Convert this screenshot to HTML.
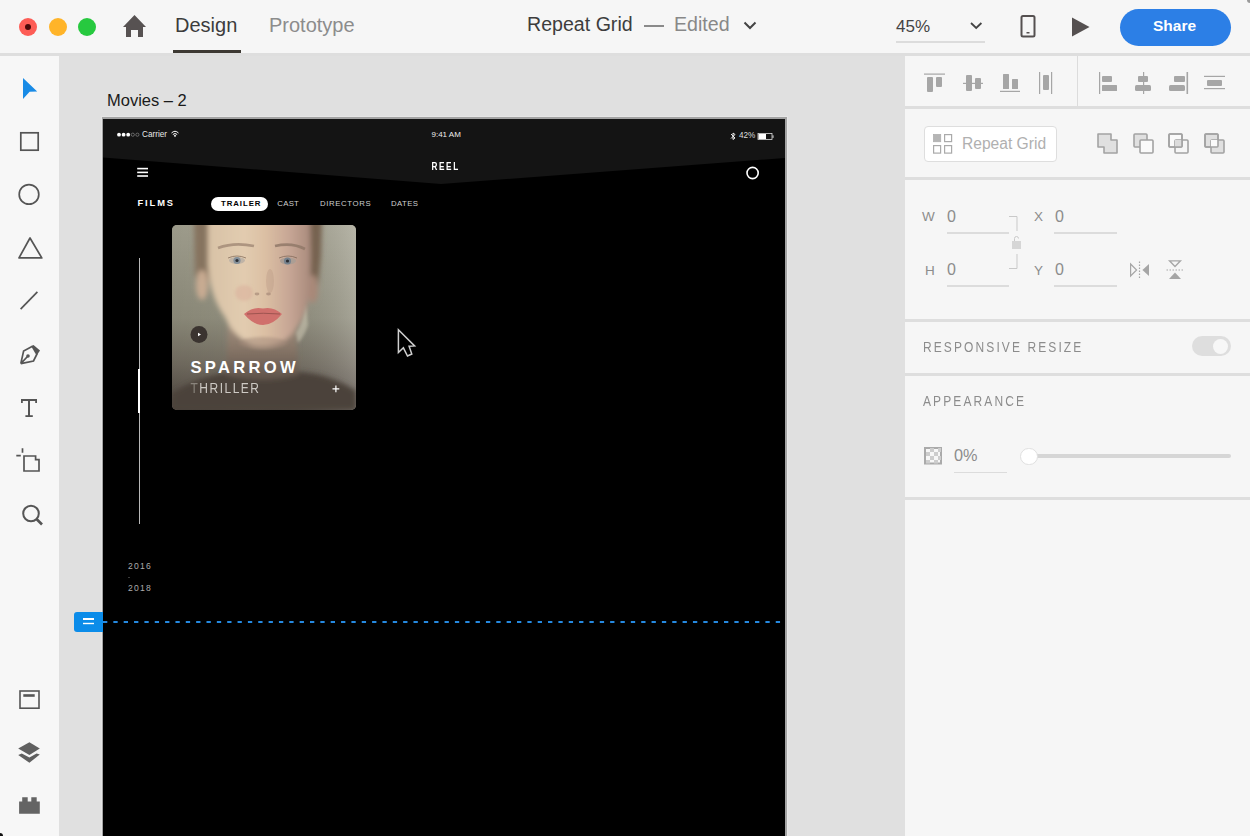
<!DOCTYPE html>
<html><head><meta charset="utf-8">
<style>
*{margin:0;padding:0;box-sizing:border-box}
html,body{width:1250px;height:836px;overflow:hidden;background:#e0e0e0;font-family:"Liberation Sans",sans-serif}
.a{position:absolute}
.t{position:absolute;white-space:nowrap;line-height:1}
svg{position:absolute;overflow:visible}
</style></head><body>
<!-- top bar -->
<div class="a" style="left:0;top:0;width:1250px;height:53px;background:#f6f6f6"></div>
<div class="a" style="left:0;top:53px;width:1250px;height:3px;background:#dedede"></div>
<!-- traffic lights -->
<div class="a" style="left:19px;top:17.5px;width:18px;height:18px;border-radius:50%;background:#fd5d56"></div>
<div class="a" style="left:25px;top:23.5px;width:6px;height:6px;border-radius:50%;background:#4a0a0a"></div>
<div class="a" style="left:49px;top:17.5px;width:18px;height:18px;border-radius:50%;background:#ffb429"></div>
<div class="a" style="left:78px;top:17.5px;width:18px;height:18px;border-radius:50%;background:#27c93f"></div>
<!-- home -->
<svg style="left:0;top:0" width="1" height="1"><path d="M134.5 15 L146 27 L143 27 L143 37 L138 37 L138 30 L131 30 L131 37 L126 37 L126 27 L123 27 Z" fill="#575252"/></svg>
<div class="t" id="design" style="left:175px;top:15px;font-size:20px;color:#3c3c3c">Design</div>
<div class="a" style="left:173px;top:50px;width:68px;height:3px;background:#3d3933"></div>
<div class="t" id="proto" style="left:269px;top:15px;font-size:20px;color:#8c8c8c">Prototype</div>
<div class="t" id="title" style="left:527px;top:15.3px;font-size:19.6px;color:#3d3d3d">Repeat Grid</div>
<div class="a" style="left:644px;top:25px;width:20px;height:1.5px;background:#8a8a8a"></div>
<div class="t" id="edited" style="left:674px;top:15.3px;font-size:19.6px;color:#888">Edited</div>
<svg style="left:0;top:0" width="1" height="1"><path d="M744.5 22.5 L750 28 L755.5 22.5" fill="none" stroke="#444" stroke-width="2"/></svg>
<div class="t" id="zoom" style="left:896px;top:18px;font-size:17px;color:#444">45%</div>
<svg style="left:0;top:0" width="1" height="1"><path d="M971 23 L976.2 28 L981.4 23" fill="none" stroke="#444" stroke-width="1.8"/></svg>
<div class="a" style="left:896px;top:41px;width:89px;height:2px;background:#dcdcdc"></div>
<!-- phone -->
<svg style="left:0;top:0" width="1" height="1"><rect x="1021.5" y="16" width="13" height="20.5" rx="1.5" fill="none" stroke="#555050" stroke-width="2"/><rect x="1026.5" y="32" width="3" height="1.5" fill="#555050"/></svg>
<!-- play -->
<svg style="left:0;top:0" width="1" height="1"><path d="M1072 17.5 L1089.5 27 L1072 36.5 Z" fill="#555050"/></svg>
<!-- share -->
<div class="a" style="left:1120px;top:9px;width:111px;height:37px;border-radius:18.5px;background:#2c7fe6"></div>
<div class="t" id="share" style="left:1153px;top:18px;font-size:15.5px;font-weight:bold;color:#fff">Share</div>

<!-- left toolbar -->
<div class="a" style="left:0;top:56px;width:59px;height:780px;background:#f7f7f7"></div>
<svg style="left:0;top:0" width="60" height="836">
<path d="M23 78 L37.2 91.4 L29.6 91.8 L23 99 Z" fill="#198be6"/>
<g fill="none" stroke="#555" stroke-width="1.7">
<rect x="20.8" y="132.8" width="17.4" height="17.4"/>
<circle cx="29" cy="194.4" r="9.8"/>
<path d="M30 238 L19 257.9 L41.8 257.9 Z" stroke-linejoin="round"/>
<path d="M20.6 309.2 L37.4 291.8"/>
<path d="M20.8 363.6 L23.6 351 L32 346.5 M37.5 353 L33.5 361 L20.8 363.6 M20.8 363.6 L27.5 356.5"/>
</g>
<path d="M31 346 L33.5 345 L40 350.5 L38.5 352.8 L36 354.5 Z" fill="#555"/>
<circle cx="28" cy="356" r="1.8" fill="#555"/>
<g fill="#555">
<rect x="21" y="399" width="16" height="2"/>
<rect x="21" y="399" width="1.8" height="4"/>
<rect x="35.2" y="399" width="1.8" height="4"/>
<rect x="28" y="399" width="2" height="17.8"/>
<rect x="25.4" y="415.2" width="7.4" height="1.8"/>
</g>
<g fill="none" stroke="#555" stroke-width="1.7">
<path d="M22.5 448.2 V452.8 M16.3 455.6 H20.8"/>
<path d="M24 456 H35.6 V459.6 H39 V471 H24 Z"/>
<circle cx="31" cy="513.5" r="7.8" stroke-width="2"/>
<path d="M36.5 519 L42 524.5" stroke-width="2.6"/>
<rect x="20" y="691" width="19" height="17.2" stroke-width="1.6"/>
</g>
<rect x="23.3" y="694.2" width="11.4" height="2.6" fill="#555"/>
<path d="M18.2 748.4 L29.4 742.2 L39.8 748.6 L29.4 755 Z" fill="#606060"/>
<path d="M18.2 754.9 L21.8 753.6 L29.4 757.6 L36.6 753.6 L39.8 754.6 L29.4 762.8 Z" fill="#606060"/>
<path d="M19.1 801.5 H22.2 V797.2 H27.7 V801.5 H31.3 V797.2 H36.7 V801.5 H39.8 V813.7 H19.1 Z" fill="#646464"/>
</svg>

<!-- right panel -->
<div class="a" style="left:905px;top:56px;width:345px;height:780px;background:#f6f6f6"></div>
<div class="a" style="left:905px;top:106px;width:345px;height:3px;background:#dedede"></div>
<div class="a" style="left:905px;top:177px;width:345px;height:3px;background:#dedede"></div>
<div class="a" style="left:905px;top:319px;width:345px;height:3px;background:#dedede"></div>
<div class="a" style="left:905px;top:373px;width:345px;height:3px;background:#dedede"></div>
<div class="a" style="left:905px;top:497px;width:345px;height:3px;background:#dedede"></div>
<div class="a" style="left:1077px;top:56px;width:1px;height:50px;background:#dcdcdc"></div>
<svg style="left:0;top:0" width="1" height="1">
<g fill="#a6a6a6">
<!-- align top -->
<rect x="924" y="73.5" width="21" height="1.2"/>
<rect x="927" y="77" width="6" height="15" rx="1"/>
<rect x="936" y="77" width="6" height="10" rx="1"/>
<!-- align middle -->
<rect x="963" y="82.8" width="20" height="1.2"/>
<rect x="966" y="75" width="6" height="16" rx="1"/>
<rect x="975" y="78" width="6" height="11" rx="1"/>
<!-- align bottom -->
<rect x="1000" y="90.8" width="20" height="1.2"/>
<rect x="1003" y="74" width="6" height="15" rx="0.5"/>
<rect x="1012" y="79" width="6" height="10" rx="0.5"/>
<!-- distribute -->
<rect x="1039" y="72" width="1.2" height="22"/>
<rect x="1051" y="72" width="1.2" height="22"/>
<rect x="1043" y="75" width="6" height="15" rx="1"/>
<!-- align left -->
<rect x="1099" y="72" width="1.2" height="22"/>
<rect x="1102" y="76" width="10" height="6" rx="1"/>
<rect x="1102" y="85" width="15" height="6" rx="0.5"/>
<!-- align center -->
<rect x="1143" y="72" width="1.2" height="22"/>
<rect x="1138" y="76" width="10" height="6" rx="1"/>
<rect x="1135" y="85" width="16" height="6" rx="1.5"/>
<!-- align right -->
<rect x="1186.5" y="72" width="1.6" height="22"/>
<rect x="1174" y="76" width="11" height="6" rx="1"/>
<rect x="1169" y="85" width="16" height="6" rx="1.5"/>
<!-- distribute h -->
<rect x="1204" y="75.8" width="21" height="1.2"/>
<rect x="1204" y="88" width="21" height="1.2"/>
<rect x="1207" y="80" width="15" height="6" rx="1"/>
</g>
</svg>
<!-- repeat grid button -->
<div class="a" style="left:923.5px;top:126px;width:133px;height:36px;border:1px solid #dedede;border-radius:4px;background:#fff"></div>
<svg style="left:0;top:0" width="1" height="1">
<rect x="933.3" y="134.3" width="7.5" height="7.5" fill="#b5b5b5" stroke="#aaa" stroke-width="0.6"/>
<g fill="none" stroke="#aaa" stroke-width="1.2">
<rect x="944.6" y="134.6" width="7" height="7"/>
<rect x="933.6" y="145.6" width="7" height="7.5"/>
<rect x="944.6" y="145.6" width="7" height="7.5"/>
</g>
</svg>
<div class="t" id="rg" style="left:962px;top:135.5px;font-size:15.6px;color:#b0b0b0">Repeat Grid</div>
<!-- boolean icons -->
<svg style="left:0;top:0" width="1" height="1">
<g stroke="#a3a3a3" stroke-width="1.6" stroke-linejoin="round">
<path d="M1098 134 H1111 V140 H1117 V153 H1104 V147 H1098 Z" fill="#e0e0e0"/>
<rect x="1134" y="134" width="13" height="13" rx="1" fill="#e0e0e0"/>
<rect x="1140" y="140" width="13" height="13" rx="1" fill="#fafafa"/>
<rect x="1169" y="134" width="13" height="13" rx="1" fill="#fafafa"/>
<rect x="1175" y="140" width="13" height="13" rx="1" fill="none"/>
<rect x="1175" y="140" width="7" height="7" fill="#dcdcdc" stroke="none"/>
<rect x="1169" y="134" width="13" height="13" rx="1" fill="none"/>
<rect x="1205" y="134" width="13" height="13" rx="1" fill="#e0e0e0"/>
<rect x="1211" y="140" width="13" height="13" rx="1" fill="#e0e0e0"/>
<rect x="1211" y="140" width="7" height="7" fill="#fafafa" stroke="none"/>
<rect x="1205" y="134" width="13" height="13" rx="1" fill="none"/>
</g>
</svg>
<!-- W H X Y -->
<div class="t" style="left:922px;top:210px;font-size:13.5px;color:#8c8c8c">W</div>
<div class="t" style="left:925px;top:263.5px;font-size:13.5px;color:#8c8c8c">H</div>
<div class="t" style="left:1034px;top:210px;font-size:13.5px;color:#8c8c8c">X</div>
<div class="t" style="left:1034px;top:263.5px;font-size:13.5px;color:#8c8c8c">Y</div>
<div class="t" style="left:947px;top:208.5px;font-size:16px;color:#8c8c8c">0</div>
<div class="t" style="left:947px;top:262px;font-size:16px;color:#8c8c8c">0</div>
<div class="t" style="left:1055px;top:208.5px;font-size:16px;color:#8c8c8c">0</div>
<div class="t" style="left:1055px;top:262px;font-size:16px;color:#8c8c8c">0</div>
<div class="a" style="left:947px;top:232px;width:62px;height:2px;background:#dcdcdc"></div>
<div class="a" style="left:947px;top:285px;width:62px;height:2px;background:#dcdcdc"></div>
<div class="a" style="left:1054px;top:232px;width:63px;height:2px;background:#dcdcdc"></div>
<div class="a" style="left:1054px;top:285px;width:63px;height:2px;background:#dcdcdc"></div>
<svg style="left:0;top:0" width="1" height="1">
<g fill="none" stroke="#c9c9c9" stroke-width="1">
<path d="M1009 216.5 H1017 V231"/>
<path d="M1017 254 V268.5 H1009"/>
<path d="M1014.5 241 V238.5 Q1014.5 236.5 1016.5 236.5 Q1018.5 236.5 1018.5 238.5"/>
</g>
<rect x="1012" y="241" width="9" height="8" fill="#d6d6d6"/>
<!-- flip h -->
<path d="M1130.6 264 L1136.6 270 L1130.6 276 Z" fill="none" stroke="#a6a6a6" stroke-width="1.2"/>
<path d="M1149 264 L1142.4 270 L1149 276 Z" fill="#a6a6a6"/>
<path d="M1139.5 261.5 V279" stroke="#a6a6a6" stroke-width="1.2" stroke-dasharray="1.5 1.5"/>
<!-- flip v -->
<path d="M1169.5 260.8 L1180.5 260.8 L1175 266.5 Z" fill="none" stroke="#a6a6a6" stroke-width="1.3"/>
<path d="M1169 279 L1181 279 L1175 272.5 Z" fill="#a6a6a6"/>
<path d="M1166.5 270 H1184" stroke="#a6a6a6" stroke-width="1.2" stroke-dasharray="1.5 1.5"/>
</svg>
<!-- responsive resize -->
<div class="t" id="rr" style="left:923px;top:339.5px;font-size:12px;letter-spacing:2.1px;transform:scaleY(1.2);transform-origin:0 0;color:#8c8c8c">RESPONSIVE RESIZE</div>
<div class="a" style="left:1192px;top:336px;width:39px;height:20px;border-radius:10px;background:#dedede"></div>
<div class="a" style="left:1213px;top:338.5px;width:15px;height:15px;border-radius:50%;background:#f7f7f7"></div>
<div class="t" id="app" style="left:923px;top:393.5px;font-size:12px;letter-spacing:2.1px;transform:scaleY(1.2);transform-origin:0 0;color:#8c8c8c">APPEARANCE</div>
<!-- opacity -->
<svg style="left:0;top:0" width="1" height="1">
<rect x="925" y="448" width="16" height="15.5" fill="#f7f7f7" stroke="#aaa" stroke-width="2"/>
<g fill="#cdcdcd">
<rect x="930" y="448" width="4" height="4"/><rect x="938" y="448" width="3" height="4"/>
<rect x="926" y="452" width="4" height="4"/><rect x="934" y="452" width="4" height="4"/>
<rect x="930" y="456" width="4" height="4"/><rect x="938" y="456" width="3" height="4"/>
<rect x="926" y="460" width="4" height="3.5"/><rect x="934" y="460" width="4" height="3.5"/>
</g>
</svg>
<div class="t" id="op" style="left:954px;top:446.5px;font-size:16.3px;color:#8c8c8c">0%</div>
<div class="a" style="left:954px;top:472px;width:53px;height:1px;background:#dcdcdc"></div>
<div class="a" style="left:1028px;top:454px;width:203px;height:4px;border-radius:2px;background:#d6d6d6"></div>
<div class="a" style="left:1020px;top:447.5px;width:17.5px;height:17.5px;border-radius:50%;background:#fff;border:1px solid #e0e0e0"></div>

<!-- artboard -->
<div class="t" id="movies" style="left:107px;top:92px;font-size:16.5px;color:#1a1a1a">Movies – 2</div>
<div class="a" style="left:101px;top:116px;width:687px;height:720px;background:#e6e6e6"></div>
<div class="a" style="left:102px;top:117px;width:685px;height:719px;background:#a3a3a3"></div>
<div class="a" id="ab" style="left:103px;top:119px;width:682px;height:717px;background:#000;overflow:hidden">
</div>
<svg style="left:0;top:0" width="1" height="1">
<path d="M103 119 H785 V158 L441 184 L103 157.5 Z" fill="#141414"/>
</svg>
<!-- status bar -->
<svg style="left:0;top:0" width="1" height="1">
<g fill="#fff"><circle cx="119" cy="134.7" r="1.9"/><circle cx="123.6" cy="134.7" r="1.9"/><circle cx="128.2" cy="134.7" r="1.9"/></g>
<g fill="none" stroke="#999" stroke-width="0.6"><circle cx="132.8" cy="134.7" r="1.6"/><circle cx="137.4" cy="134.7" r="1.6"/></g>
<path d="M171.5 133 Q175 129.5 178.5 133 M172.8 134.5 Q175 132.5 177.2 134.5" fill="none" stroke="#fff" stroke-width="1"/>
<path d="M175 137.3 L173.8 135.6 Q175 134.6 176.2 135.6 Z" fill="#fff"/>
</svg>
<div class="t" style="left:142px;top:131.3px;font-size:8.2px;color:#e8e8e8">Carrier</div>
<div class="t" style="left:431.5px;top:131px;font-size:8px;color:#eee;letter-spacing:0px">9:41 AM</div>
<svg style="left:0;top:0" width="1" height="1">
<path d="M731 134 L735 138 L733 139.5 V133 L735 134.5 L731 138.5" fill="none" stroke="#fff" stroke-width="0.9"/>
<rect x="758" y="133.5" width="14" height="6" fill="none" stroke="#ddd" stroke-width="0.8"/>
<rect x="758.5" y="134" width="7.5" height="5" fill="#fff"/>
<rect x="772.5" y="135.3" width="1" height="2.6" fill="#ddd"/>
</svg>
<div class="t" style="left:739px;top:132px;font-size:8.2px;color:#ddd">42%</div>
<!-- header -->
<div class="t" style="left:431.5px;top:162.2px;font-size:8.2px;font-weight:bold;letter-spacing:1.6px;transform:scaleY(1.25);transform-origin:0 0;color:#fff">REEL</div>
<svg style="left:0;top:0" width="1" height="1">
<g fill="#fff"><rect x="137.2" y="167.8" width="10.8" height="1.6"/><rect x="137.2" y="171.6" width="10.8" height="1.6"/><rect x="137.2" y="175.2" width="10.8" height="1.6"/></g>
<circle cx="752.6" cy="173" r="5.6" fill="none" stroke="#fff" stroke-width="1.6"/>
</svg>
<div class="t" style="left:137.5px;top:199px;font-size:9.3px;font-weight:bold;letter-spacing:1.9px;color:#fff">FILMS</div>
<div class="a" style="left:211px;top:196.5px;width:57px;height:14.5px;border-radius:7.25px;background:#fff"></div>
<div class="t" style="left:221px;top:199.8px;font-size:7.8px;font-weight:bold;letter-spacing:0.95px;color:#000">TRAILER</div>
<div class="t" style="left:277.3px;top:199.6px;font-size:7.8px;letter-spacing:0.25px;color:#cfcfcf">CAST</div>
<div class="t" style="left:320px;top:199.6px;font-size:7.8px;letter-spacing:0.6px;color:#cfcfcf">DIRECTORS</div>
<div class="t" style="left:391px;top:199.6px;font-size:7.8px;letter-spacing:0.4px;color:#cfcfcf">DATES</div>
<!-- card -->
<div class="a" style="left:172px;top:225px;width:184px;height:185px;border-radius:5px;overflow:hidden;background:#7a7868">
<svg style="left:0;top:0" width="184" height="185" viewBox="0 0 184 185">
<defs>
<linearGradient id="bgL" x1="0" y1="0" x2="0" y2="1">
<stop offset="0" stop-color="#a5a392"/><stop offset="0.5" stop-color="#908e7d"/><stop offset="0.75" stop-color="#746e62"/><stop offset="1" stop-color="#4e4640"/>
</linearGradient>
<linearGradient id="bgR" x1="0" y1="0" x2="1" y2="0">
<stop offset="0" stop-color="#000" stop-opacity="0.06"/><stop offset="0.45" stop-color="#000" stop-opacity="0"/><stop offset="1" stop-color="#fff" stop-opacity="0.2"/>
</linearGradient>
<linearGradient id="skin" x1="0" y1="0" x2="1" y2="0">
<stop offset="0" stop-color="#d8c2a6"/><stop offset="0.35" stop-color="#e2ccb0"/><stop offset="0.55" stop-color="#dcc0a4"/><stop offset="0.8" stop-color="#c6a594"/><stop offset="1" stop-color="#a88a7c"/>
</linearGradient>
<linearGradient id="neck" x1="0" y1="0" x2="0" y2="1">
<stop offset="0" stop-color="#a89482"/><stop offset="0.5" stop-color="#857466"/><stop offset="1" stop-color="#5e524a"/>
</linearGradient>
<filter id="b3" x="-30%" y="-30%" width="160%" height="160%"><feGaussianBlur stdDeviation="2.6"/></filter>
<filter id="b2" x="-50%" y="-50%" width="200%" height="200%"><feGaussianBlur stdDeviation="1.5"/></filter>
<filter id="b1" x="-50%" y="-50%" width="200%" height="200%"><feGaussianBlur stdDeviation="0.7"/></filter>
</defs>
<rect width="184" height="185" fill="url(#bgL)"/>
<rect width="184" height="185" fill="url(#bgR)"/>
<g filter="url(#b3)">
<path d="M22 -5 H38 L37 55 L30 75 L23 50 Z" fill="#86735f"/>
<path d="M136 -5 H150 L149 30 L146 62 L139 70 Z" fill="#76624f"/>
<path d="M0 168 Q30 150 60 147 H128 Q160 150 184 166 V185 H0 Z" fill="#4c423b"/>
<path d="M56 95 H124 L126 150 Q90 160 54 150 Z" fill="url(#neck)"/>
<ellipse cx="30" cy="60" rx="6" ry="15" fill="#c8ab92"/>
<ellipse cx="141" cy="64" rx="5" ry="14" fill="#a88878"/>
<path d="M36 -5 H138 Q140 40 137 72 Q133 100 112 116 Q96 124 80 120 Q60 110 53 92 Q38 72 36 40 Z" fill="url(#skin)"/>
</g>
<g filter="url(#b2)">
<ellipse cx="72" cy="68" rx="9" ry="8" fill="#d49a8a" opacity="0.3"/>
<path d="M124 108 Q132 96 134 80 L136 100 Q132 112 126 118 Z" fill="#d8d2bc" opacity="0.5"/>
<ellipse cx="91" cy="118" rx="24" ry="6" fill="#a08878" opacity="0.5"/>
</g>
<g filter="url(#b1)">
<path d="M46 23 Q62 17 82 21" stroke="#a48c78" stroke-width="2.8" fill="none" opacity="0.85"/>
<path d="M103 21 Q120 17 133 24" stroke="#907868" stroke-width="2.8" fill="none" opacity="0.85"/>
<ellipse cx="65" cy="35.5" rx="8" ry="3.4" fill="#c0b4a6"/>
<ellipse cx="116" cy="36" rx="8" ry="3.4" fill="#ac9e94"/>
<circle cx="65" cy="35.5" r="3.6" fill="#84909a"/>
<circle cx="115.5" cy="36" r="3.6" fill="#76828e"/>
<circle cx="65" cy="35.5" r="1.6" fill="#2c2e34"/>
<circle cx="115.5" cy="36" r="1.6" fill="#2c2e34"/>
<path d="M56 33 Q65 29 74 33" stroke="#7a6454" stroke-width="1" fill="none" opacity="0.7"/>
<path d="M107 33 Q116 29 125 33" stroke="#7a6454" stroke-width="1" fill="none" opacity="0.7"/>
<ellipse cx="98" cy="56" rx="4" ry="12" fill="#b89482" opacity="0.35"/>
<ellipse cx="85" cy="69" rx="2.4" ry="1.4" fill="#8a6a5e" opacity="0.45"/>
<ellipse cx="96.5" cy="69" rx="2.4" ry="1.4" fill="#8a6a5e" opacity="0.45"/>
<path d="M72 89 Q81 81 91 83.5 Q101 81 110 89 Q101 100 91 100 Q81 100 72 89 Z" fill="#d0706c"/>
<path d="M75 89 Q91 87.5 108 89" stroke="#9e5450" stroke-width="1" fill="none"/>
</g>
<circle cx="27" cy="109.5" r="8.5" fill="#3b3430"/>
<path d="M26 107.8 L29 109.5 L26 111.2 Z" fill="#fff"/>
<path d="M163.9 160.5 V167.3 M160.5 163.9 H167.3" stroke="#fff" stroke-width="1.2"/>
</svg>
</div>
<div class="t" style="left:190.5px;top:359.5px;font-size:16.6px;font-weight:bold;letter-spacing:3.3px;color:#fff">SPARROW</div>
<div class="t" style="left:190.5px;top:380.5px;font-size:12px;letter-spacing:1.5px;transform:scaleY(1.15);transform-origin:0 0;color:#cdc9c4"><span style="color:#8a847c">T</span>HRILLER</div>
<!-- scroll -->
<div class="a" style="left:138.5px;top:257.7px;width:1px;height:266px;background:#b8b8b8"></div>
<div class="a" style="left:138px;top:369.2px;width:2px;height:43.6px;background:#fff"></div>
<div class="t" style="left:128px;top:561.5px;font-size:8.6px;letter-spacing:1.2px;color:#acacac">2016</div>
<div class="t" style="left:128px;top:583.6px;font-size:8.6px;letter-spacing:1.2px;color:#acacac">2018</div>
<div class="a" style="left:128px;top:577px;width:1.5px;height:1px;background:#3a3a3a"></div>
<!-- guide -->
<svg style="left:0;top:0" width="1" height="1">
<path d="M103 622 H781" stroke="#2589e0" stroke-width="2" stroke-dasharray="4.3 6.05"/>
<path d="M77 612 H103 V632 H77 Q74 632 74 629 V615 Q74 612 77 612 Z" fill="#0b8ce9"/>
<rect x="83" y="618" width="11" height="2" fill="#fff"/>
<rect x="83" y="622.8" width="11" height="1.4" fill="#fff"/>
</svg>
<!-- cursor -->
<svg style="left:0;top:0" width="1" height="1">
<path d="M398.4 329.7 L398.4 352.6 L403.4 347.8 L407.5 356 L411.8 354 L409.1 346.2 L414.6 345.9 Z" fill="#000" stroke="#cfcfcf" stroke-width="1.5" stroke-linejoin="miter"/>
</svg>

<div class="a" style="left:1247px;top:-3px;width:6px;height:6px;border-radius:50%;background:#9a9a9a"></div>
<div class="a" style="left:-3px;top:833px;width:6px;height:6px;border-radius:50%;background:#111"></div>
</body></html>
